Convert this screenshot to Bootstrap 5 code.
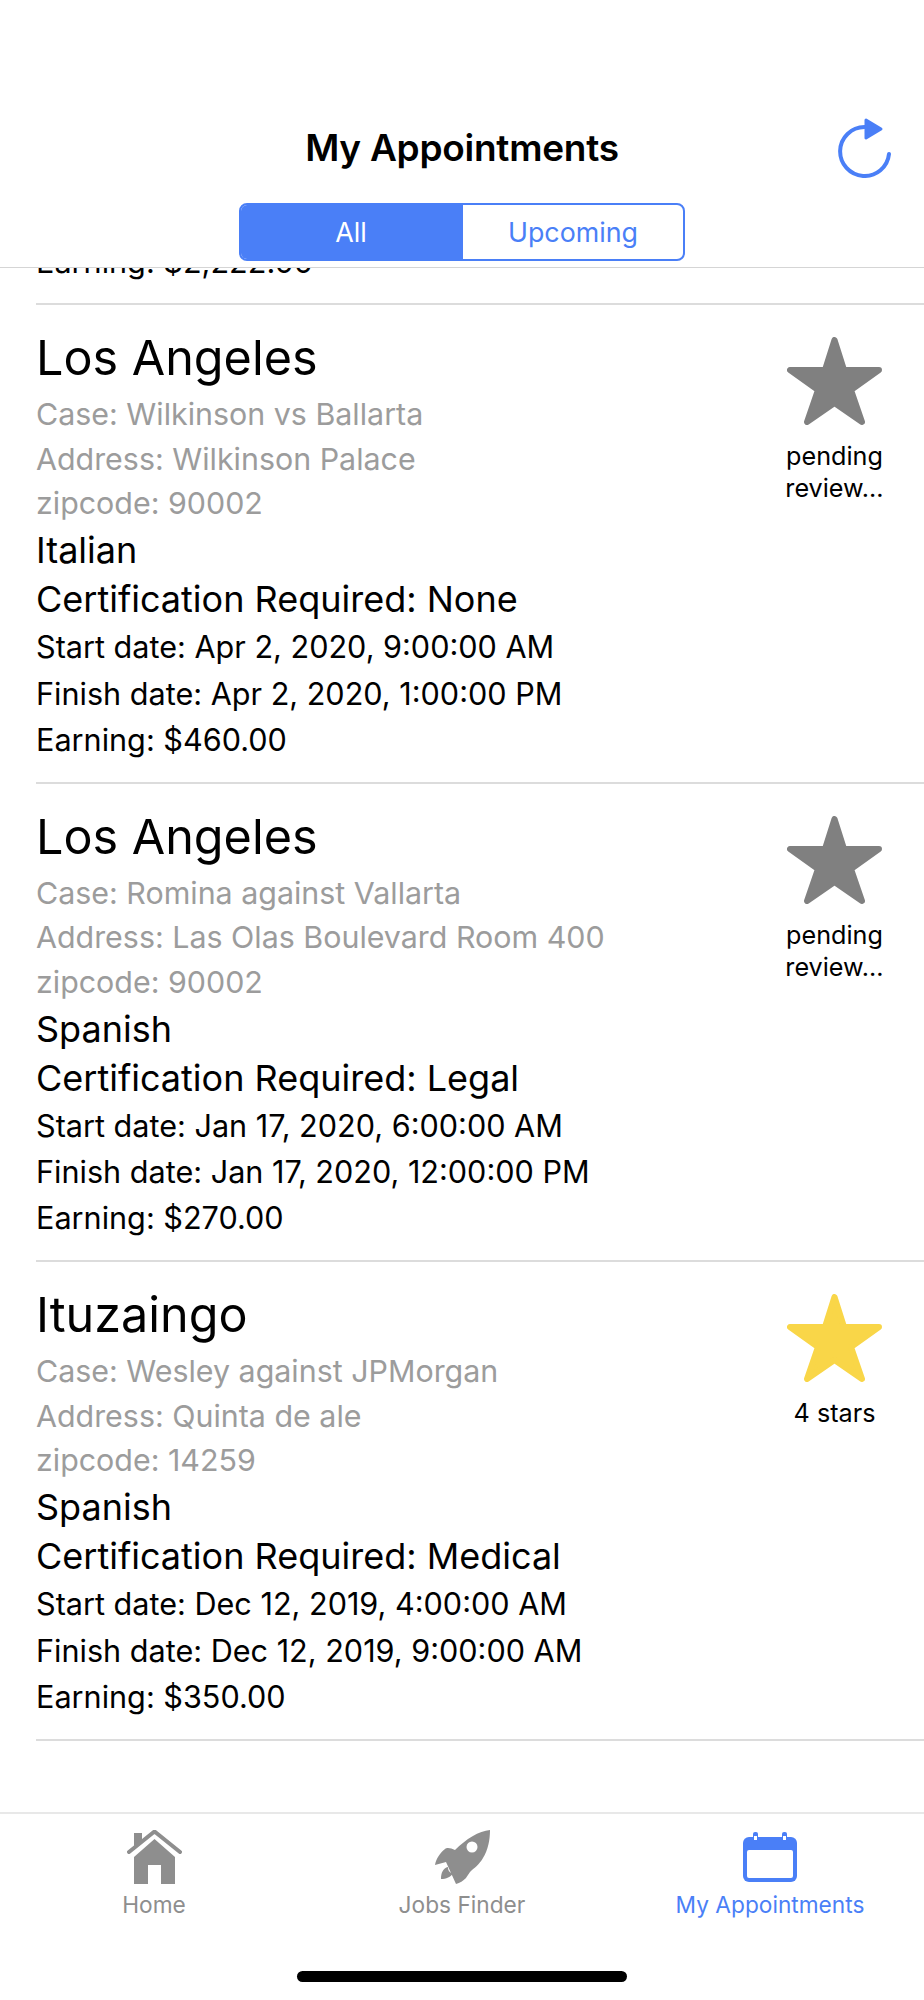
<!DOCTYPE html>
<html lang="en">
<head>
  <meta charset="UTF-8">
  <title>My Appointments</title>
  <link href="https://cdn.jsdelivr.net/npm/bootstrap@5.3.3/dist/css/bootstrap.min.css" rel="stylesheet">
  <style>
    body { font-family: Inter, "Liberation Sans", sans-serif; background: #fff; color: #000; height: 2000px; overflow: hidden; }
    .app-screen { height: 2000px; }
    .top-bar { height: 268px; border-bottom: 1px solid #d5d5d5; padding-top: 118px; }
    .title-row { height: 60px; padding-left: 36px; padding-right: 33px; }
    .screen-title { font-size: 37px; font-weight: 600; line-height: 60px; letter-spacing: -.25px; position: absolute; left: 0; right: 0; text-align: center; }
    .title-wrap { position: relative; }
    .refresh-icon { width: 53px; height: 60px; margin-left: auto; display: block; }
    .segment { width: 446px; height: 58px; margin: 25px auto 0; border: 2px solid #4a7ff7; border-radius: 8px; overflow: hidden; }
    .segment-item { flex: 1; font-size: 26.8px; line-height: 54px; text-align: center; color: #4a7ff7; }
    .segment-item.is-active { background: #4a7ff7; color: #fff; padding-right: 2px; }
    .appt-list { height: 1544px; overflow: hidden; }
    .clipped-row { height: 37px; margin-left: 36px; border-bottom: 2px solid #dcdcdc; overflow: hidden; }
    .clipped-row .line-date { margin-top: -29px; }
    .appt-row { height: 478.5px; margin-left: 36px; border-bottom: 2px solid #dcdcdc; padding-top: 22px; }
    .appt-info { flex: 1; }
    .line-city { font-size: 48.5px; line-height: 62px; margin-bottom: 3px; }
    .line-gray { font-size: 30.4px; line-height: 44.7px; color: #9c9c9c; }
    .line-lang { font-size: 36px; line-height: 49px; }
    .line-date { font-size: 30.6px; line-height: 46.4px; }
    .rating { width: 130px; margin-right: 24.5px; font-size: 25.2px; line-height: 32px; text-align: center; }
    .rating svg { display: block; margin: 10px auto 15px; }
    .tab-bar { height: 188px; border-top: 2px solid #e8e8e8; position: relative; padding-top: 15px; }
    .tab-item { flex: 1; font-size: 22.7px; line-height: 33px; color: #8e8e8e; text-align: center; }
    .tab-item.is-active { color: #4a7ff7; }
    .tab-icon { height: 56px; margin-bottom: 3px; display: flex; align-items: center; justify-content: center; }
    .home-bar { width: 330px; height: 11px; background: #000; border-radius: 6px; position: absolute; left: 297px; bottom: 18px; }
  </style>
</head>
<body>
  <div class="app-screen d-flex flex-column">

    <!-- cabecera -->
    <div class="top-bar">
      <div class="title-row title-wrap">
        <div class="screen-title">My Appointments</div>
        <svg class="refresh-icon" viewBox="0 0 53 60" fill="none">
          <path d="M26.5 9 A24.5 24.5 0 1 0 51 36" stroke="#4a7ff7" stroke-width="4" stroke-linecap="round"/>
          <path d="M28 2 L43 11 L28 20 Z" fill="#4a7ff7" stroke="#4a7ff7" stroke-width="3" stroke-linejoin="round"/>
        </svg>
      </div>
      <div class="segment d-flex">
        <div class="segment-item is-active">All</div>
        <div class="segment-item">Upcoming</div>
      </div>
    </div>

    <!-- lista -->
    <div class="appt-list">
      <div class="clipped-row">
        <div class="line-date">Earning: $2,222.00</div>
      </div>

      <div class="appt-row d-flex">
        <div class="appt-info">
          <div class="line-city">Los Angeles</div>
          <div class="line-gray">Case: Wilkinson vs Ballarta</div>
          <div class="line-gray">Address: Wilkinson Palace</div>
          <div class="line-gray">zipcode: 90002</div>
          <div class="line-lang">Italian</div>
          <div class="line-lang">Certification Required: None</div>
          <div class="line-date">Start date: Apr 2, 2020, 9:00:00 AM</div>
          <div class="line-date">Finish date: Apr 2, 2020, 1:00:00 PM</div>
          <div class="line-date">Earning: $460.00</div>
        </div>
        <div class="rating">
          <svg width="95" height="88" viewBox="0 0 95 88"><path d="M47.5 3 L57 33 L92 33 L64 53 L75 85 L47.5 66 L20 85 L31 53 L3 33 L38 33 Z" fill="#808080" stroke="#808080" stroke-width="6" stroke-linejoin="round"/></svg>
          pending<br>review...
        </div>
      </div>

      <div class="appt-row d-flex">
        <div class="appt-info">
          <div class="line-city">Los Angeles</div>
          <div class="line-gray">Case: Romina against Vallarta</div>
          <div class="line-gray">Address: Las Olas Boulevard Room 400</div>
          <div class="line-gray">zipcode: 90002</div>
          <div class="line-lang">Spanish</div>
          <div class="line-lang">Certification Required: Legal</div>
          <div class="line-date">Start date: Jan 17, 2020, 6:00:00 AM</div>
          <div class="line-date">Finish date: Jan 17, 2020, 12:00:00 PM</div>
          <div class="line-date">Earning: $270.00</div>
        </div>
        <div class="rating">
          <svg width="95" height="88" viewBox="0 0 95 88"><path d="M47.5 3 L57 33 L92 33 L64 53 L75 85 L47.5 66 L20 85 L31 53 L3 33 L38 33 Z" fill="#808080" stroke="#808080" stroke-width="6" stroke-linejoin="round"/></svg>
          pending<br>review...
        </div>
      </div>

      <div class="appt-row d-flex">
        <div class="appt-info">
          <div class="line-city">Ituzaingo</div>
          <div class="line-gray">Case: Wesley against JPMorgan</div>
          <div class="line-gray">Address: Quinta de ale</div>
          <div class="line-gray">zipcode: 14259</div>
          <div class="line-lang">Spanish</div>
          <div class="line-lang">Certification Required: Medical</div>
          <div class="line-date">Start date: Dec 12, 2019, 4:00:00 AM</div>
          <div class="line-date">Finish date: Dec 12, 2019, 9:00:00 AM</div>
          <div class="line-date">Earning: $350.00</div>
        </div>
        <div class="rating">
          <svg width="95" height="88" viewBox="0 0 95 88"><path d="M47.5 3 L57 33 L92 33 L64 53 L75 85 L47.5 66 L20 85 L31 53 L3 33 L38 33 Z" fill="#f9d648" stroke="#f9d648" stroke-width="6" stroke-linejoin="round"/></svg>
          4 stars
        </div>
      </div>
    </div>

    <!-- barra inferior -->
    <div class="tab-bar d-flex">
      <div class="tab-item">
        <div class="tab-icon">
          <svg width="55" height="54" viewBox="0 0 55 54">
            <path d="M7 3 H15 V13 L7 20 Z" fill="#8e8e8e"/>
            <path d="M2 22 L27.5 1.5 L53 22" fill="none" stroke="#8e8e8e" stroke-width="4" stroke-linecap="round" stroke-linejoin="round"/>
            <path d="M7 27 L27.5 9 L48 27 V54 H34 V35 H21 V54 H7 Z" fill="#8e8e8e"/>
          </svg>
        </div>
        Home
      </div>
      <div class="tab-item">
        <div class="tab-icon">
          <svg width="56" height="54" viewBox="0 0 56 54">
            <path d="M56 0 C45 1 32 9 21 20 C17 18 13 17 11 19 C6 23 2 29 1 35 L12 32 L22 54 C26 53 29 51 32 48 C33 46 34 45 36 42 C40 38 45 35 49 28 C54 20 56 10 56 0 Z" fill="#8e8e8e"/>
            <circle cx="38" cy="17" r="5.5" fill="#fff"/>
            <path d="M14 37 C9 38 7 43 7 49 C12 49 17 47 19 43 C16 43 14 41 14 37 Z" fill="#8e8e8e"/>
          </svg>
        </div>
        Jobs Finder
      </div>
      <div class="tab-item is-active">
        <div class="tab-icon">
          <svg width="54" height="50" viewBox="0 0 54 50">
            <rect y="5" width="54" height="45" rx="6" fill="#4a7ff7"/>
            <rect x="4" y="18" width="46" height="28" rx="2" fill="#fff"/>
            <rect x="10" y="0" width="5" height="9" rx="2" fill="#4a7ff7"/>
            <rect x="39" y="0" width="5" height="9" rx="2" fill="#4a7ff7"/>
            <rect x="11" y="4" width="3" height="4" fill="#fff"/>
            <rect x="40" y="4" width="3" height="4" fill="#fff"/>
          </svg>
        </div>
        My Appointments
      </div>
      <div class="home-bar"></div>
    </div>

  </div>
</body>
</html>
